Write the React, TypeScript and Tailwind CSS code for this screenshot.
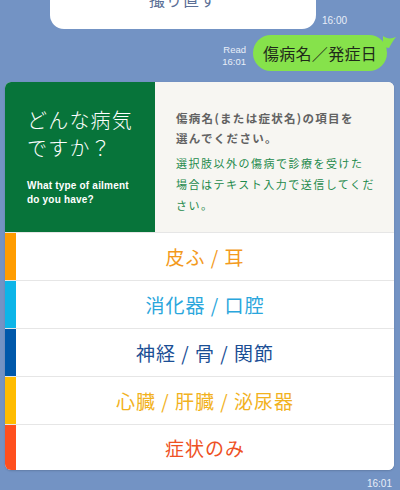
import React from 'react';

const jp = { fontFamily: '"Noto Sans CJK JP", "Noto Sans", sans-serif' };

interface Choice {
  label: string;
  bar: string;
  text: string;
}

const choices: Choice[] = [
  { label: '皮ふ / 耳', bar: 'bg-[#ff9c00]', text: 'text-[#f39a1c]' },
  { label: '消化器 / 口腔', bar: 'bg-[#0db5e8]', text: 'text-[#2aa6dc]' },
  { label: '神経 / 骨 / 関節', bar: 'bg-[#0058aa]', text: 'text-[#1b4f95]' },
  { label: '心臓 / 肝臓 / 泌尿器', bar: 'bg-[#ffbc00]', text: 'text-[#f2b21e]' },
  { label: '症状のみ', bar: 'bg-[#ff4f1e]', text: 'text-[#ee5124]' },
];

const ChoiceRow: React.FC<{ choice: Choice; last: boolean }> = ({ choice, last }) => (
  <div className={`flex border-t border-[#e6e6e6] ${last ? 'h-[46px]' : 'h-[48px]'}`}>
    <div className={`w-[11px] shrink-0 ${choice.bar}`} />
    <div className="flex-1 flex items-center justify-center bg-white">
      <span className={`text-[19px] leading-none tracking-[1px] ${choice.text}`} style={jp}>
        {choice.label}
      </span>
    </div>
  </div>
);

export default function App() {
  return (
    <div className="w-[400px] h-[490px] overflow-hidden bg-[#7393c4] flex flex-col" style={jp}>
      {/* previous bubble */}
      <div className="flex items-end h-[29px]">
        <div className="ml-[50px] w-[266px] h-[29px] bg-white rounded-b-[14px] overflow-hidden flex justify-center">
          <span className="-mt-[11px] text-[16px] leading-[20px] text-[#5b6f96] tracking-[1px]">撮り直す</span>
        </div>
        <span className="ml-[6px] mb-[3px] text-[10px] leading-none text-[#e8eef8]" style={{ fontFamily: '"Liberation Sans", sans-serif' }}>
          16:00
        </span>
      </div>

      {/* sent bubble */}
      <div className="flex items-end justify-end mt-[6px] pr-[13px]">
        <div className="flex flex-col items-end mr-[7px] mb-[3px] text-[9.5px] leading-[12px] text-[#e8eef8]" style={{ fontFamily: '"Liberation Sans", sans-serif' }}>
          <span>Read</span>
          <span>16:01</span>
        </div>
        <div className="relative">
          <div className="h-[36px] w-[134px] rounded-[18px] bg-[#86e24b] flex items-center justify-center">
            <span className="text-[16px] leading-none text-[#1f2a1a] tracking-[0.3px]">傷病名／発症日</span>
          </div>
          <svg className="absolute -right-[10px] top-0" width="14" height="14" viewBox="0 0 14 14">
            <path d="M0 1 C4 4 8 4 13 2 C10 6 8 9 6 13 L0 12 Z" fill="#86e24b" />
          </svg>
        </div>
      </div>

      {/* card */}
      <div className="mx-[5px] w-[389px] mt-[11px] rounded-[6px] overflow-hidden bg-white shadow-[0_1px_2px_rgba(0,0,0,0.15)]">
        <div className="flex h-[150px]">
          <div className="w-[150px] shrink-0 bg-[#07743a] pl-[22px] pt-[24px]">
            <div className="text-[20px] leading-[28px] font-light text-white tracking-[1.2px]">
              どんな病気
              <br />
              ですか？
            </div>
            <div
              className="mt-[17px] text-[10px] leading-[13.5px] font-bold text-white tracking-[0.2px]"
              style={{ fontFamily: '"Liberation Sans", sans-serif' }}
            >
              What type of ailment
              <br />
              do you have?
            </div>
          </div>
          <div className="flex-1 bg-[#f7f6f2] pl-[21px] pt-[26px] whitespace-nowrap">
            <p className="text-[11.5px] leading-[20px] font-bold text-[#626262] tracking-[1.3px]">
              傷病名(または症状名)の項目を
              <br />
              選んでください。
            </p>
            <p className="mt-[5px] text-[11px] leading-[21px] text-[#1e8a4c] tracking-[1.5px]">
              選択肢以外の傷病で診療を受けた
              <br />
              場合はテキスト入力で送信してくだ
              <br />
              さい。
            </p>
          </div>
        </div>
        {choices.map((c, i) => (
          <ChoiceRow key={c.label} choice={c} last={i === choices.length - 1} />
        ))}
      </div>

      <div className="flex justify-end pr-[8px] mt-[9px]">
        <span className="text-[10px] leading-none text-[#e8eef8]" style={{ fontFamily: '"Liberation Sans", sans-serif' }}>
          16:01
        </span>
      </div>
    </div>
  );
}
